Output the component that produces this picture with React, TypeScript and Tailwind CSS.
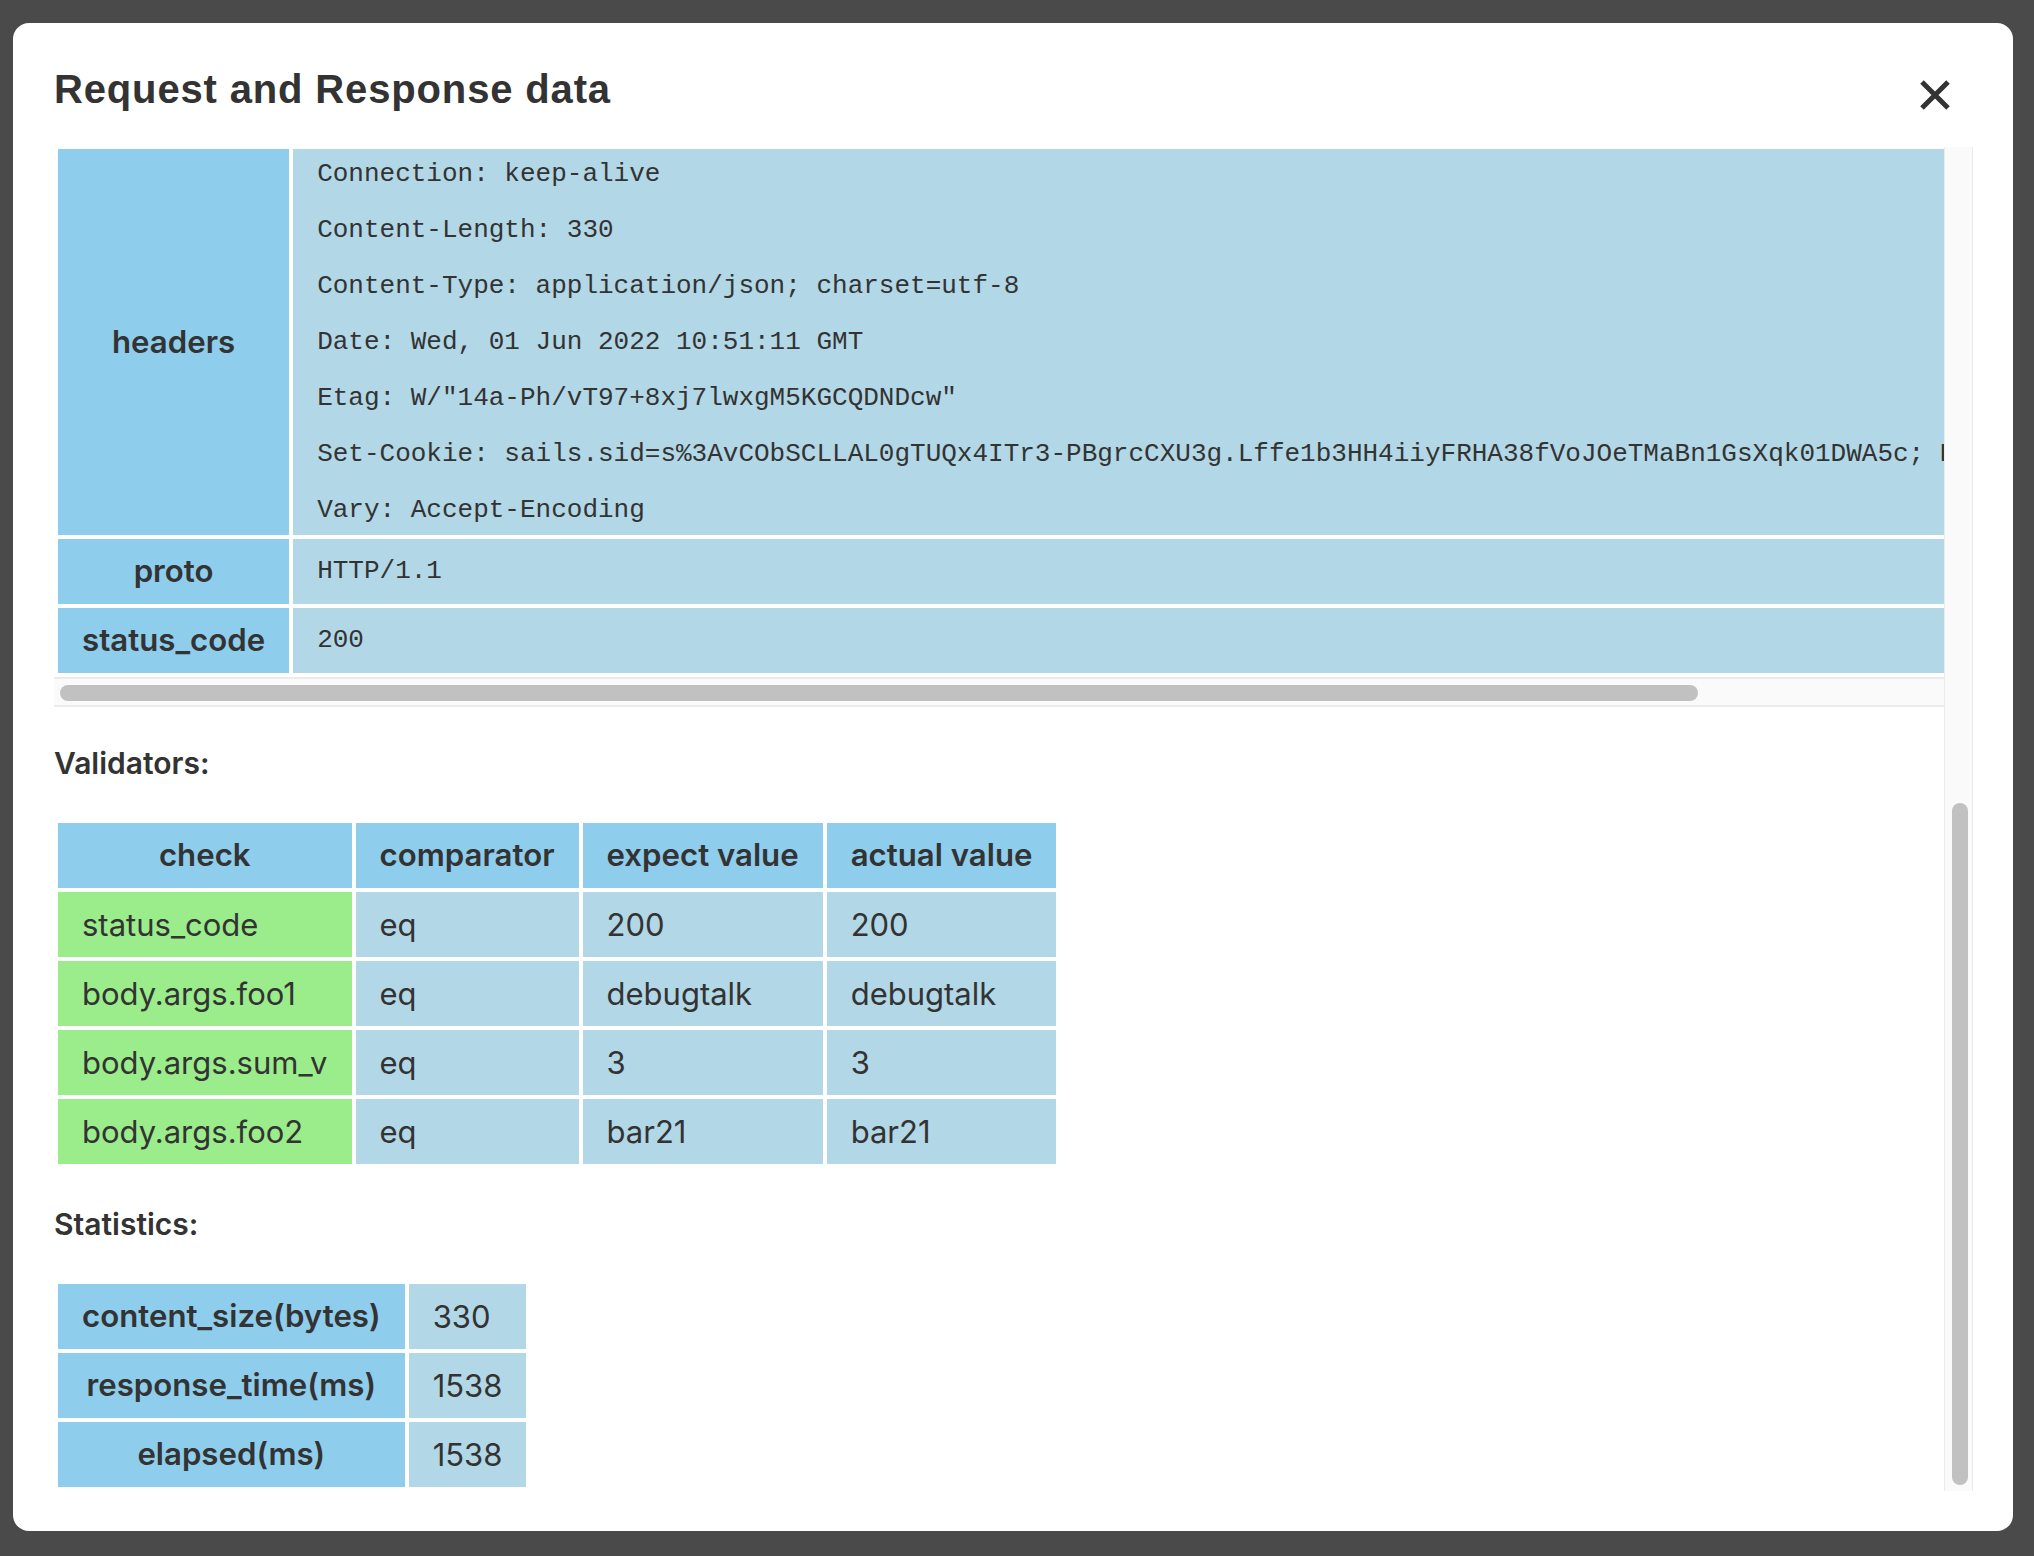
const responseHeaders = [
  "Connection: keep-alive",
  "Content-Length: 330",
  "Content-Type: application/json; charset=utf-8",
  "Date: Wed, 01 Jun 2022 10:51:11 GMT",
  'Etag: W/"14a-Ph/vT97+8xj7lwxgM5KGCQDNDcw"',
  "Set-Cookie: sails.sid=s%3AvCObSCLLAL0gTUQx4ITr3-PBgrcCXU3g.Lffe1b3HH4iiyFRHA38fVoJOeTMaBn1GsXqk01DWA5c; Path=/; HttpOnly",
  "Vary: Accept-Encoding",
];

const validators = [
  { check: "status_code", comparator: "eq", expect: "200", actual: "200" },
  { check: "body.args.foo1", comparator: "eq", expect: "debugtalk", actual: "debugtalk" },
  { check: "body.args.sum_v", comparator: "eq", expect: "3", actual: "3" },
  { check: "body.args.foo2", comparator: "eq", expect: "bar21", actual: "bar21" },
];

const statistics = [
  { label: "content_size(bytes)", value: "330" },
  { label: "response_time(ms)", value: "1538" },
  { label: "elapsed(ms)", value: "1538" },
];

const th =
  "bg-[#8ecdeb] px-6 py-3 text-center align-middle text-[31.2px] leading-[41px] font-semibold whitespace-nowrap";
const td = "bg-[#b2d7e6] px-6 py-3 text-left align-middle text-[31px] leading-[41px] whitespace-nowrap";
const tdPass = "bg-[#9bec8b] px-6 py-3 text-left align-middle text-[31px] leading-[41px] whitespace-nowrap";
const tdMono =
  "bg-[#b2d7e6] px-6 py-3 text-left align-middle font-['Liberation_Mono',monospace] text-[26px] leading-[41px] whitespace-pre";
const tdLines =
  "bg-[#b2d7e6] px-6 py-0 text-left align-middle font-['Liberation_Mono',monospace] text-[26px] leading-[50px] whitespace-pre";

function Heading({ children }: { children: string }) {
  return <h3 className="my-9 text-[30px] leading-[40px] font-semibold text-[#333]">{children}</h3>;
}

function CloseIcon() {
  return (
    <svg width="32" height="32" viewBox="0 0 32 32" className="mt-[10px] mr-[22px] shrink-0">
      <path d="M3 3 L29 29 M29 3 L3 29" stroke="#333" strokeWidth="5" strokeLinecap="butt" fill="none" />
    </svg>
  );
}

export default function App() {
  return (
    <div className="h-[1556px] w-full overflow-hidden bg-[#4a4a4a] pt-[23px] pl-[13px] font-['Inter',sans-serif] text-[#333]">
      <div className="flex h-[1508px] w-[2000px] flex-col rounded-2xl bg-white pr-[40px] pb-[40px] pl-[41px]">
        <div className="flex h-[124px] shrink-0 items-start justify-between pt-[46px]">
          <h2 className="font-['Liberation_Sans',Arial,sans-serif] text-[40px] leading-[40px] font-bold tracking-[0.85px] text-[#333]">
            Request and Response data
          </h2>
          <CloseIcon />
        </div>

        <div className="flex min-h-0 flex-1">
          {/* body is scrolled to its end: content sits at the bottom, the top is clipped */}
          <div className="flex min-w-0 flex-1 flex-col justify-end overflow-hidden bg-white">
            <div className="shrink-0">
              <div>
                <div className="overflow-hidden">
                  <table className="border-separate border-spacing-1">
                    <tbody>
                      <tr>
                        <th className={th}>headers</th>
                        <td className={tdLines}>
                          <div className="flex flex-col gap-[6px]">
                            {responseHeaders.map((line) => (
                              <div key={line}>{line}</div>
                            ))}
                          </div>
                        </td>
                      </tr>
                      <tr>
                        <th className={th}>proto</th>
                        <td className={tdMono}>HTTP/1.1</td>
                      </tr>
                      <tr>
                        <th className={th}>status_code</th>
                        <td className={tdMono}>200</td>
                      </tr>
                    </tbody>
                  </table>
                </div>
                <div className="h-[30px] border-y-2 border-[#ebebeb] bg-[#fafafa] pt-[6px] pl-[6px]">
                  <div className="h-4 w-[1638px] rounded-full bg-[#c1c1c1]" />
                </div>
              </div>

              <Heading>Validators:</Heading>
              <table className="border-separate border-spacing-1">
                <thead>
                  <tr>
                    <th className={th}>check</th>
                    <th className={th}>comparator</th>
                    <th className={th}>expect value</th>
                    <th className={th}>actual value</th>
                  </tr>
                </thead>
                <tbody>
                  {validators.map((v) => (
                    <tr key={v.check}>
                      <td className={tdPass}>{v.check}</td>
                      <td className={td}>{v.comparator}</td>
                      <td className={td}>{v.expect}</td>
                      <td className={td}>{v.actual}</td>
                    </tr>
                  ))}
                </tbody>
              </table>

              <Heading>Statistics:</Heading>
              <table className="border-separate border-spacing-1">
                <tbody>
                  {statistics.map((s) => (
                    <tr key={s.label}>
                      <th className={th}>{s.label}</th>
                      <td className={td}>{s.value}</td>
                    </tr>
                  ))}
                </tbody>
              </table>
            </div>
          </div>

          {/* vertical scrollbar, thumb at the end */}
          <div className="flex w-[29px] shrink-0 flex-col justify-end border-x border-[#ebebeb] bg-[#fafafa] pb-[6px] pl-[7px]">
            <div className="h-[682px] w-4 rounded-full bg-[#c1c1c1]" />
          </div>
        </div>
      </div>
    </div>
  );
}
